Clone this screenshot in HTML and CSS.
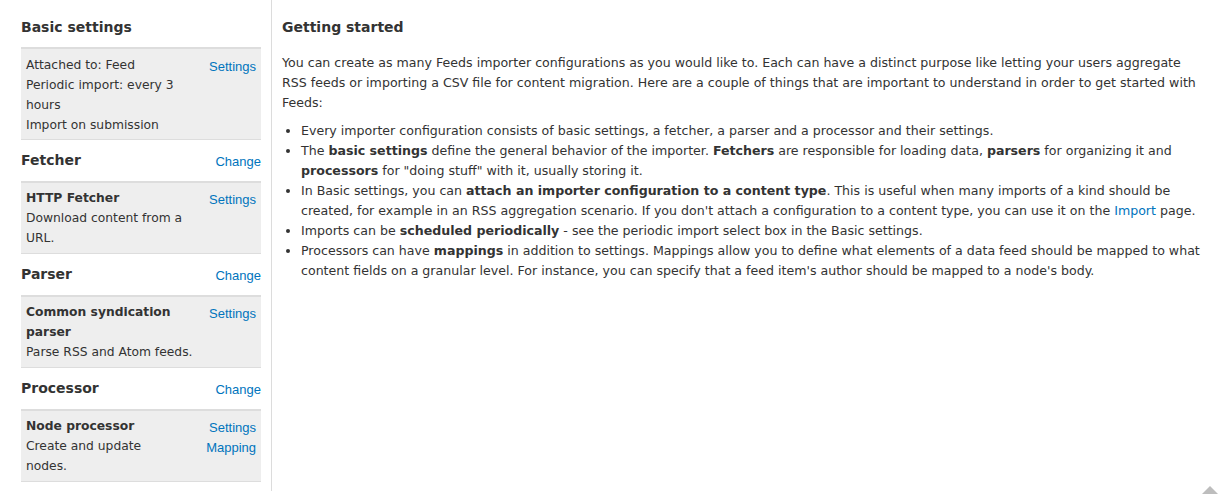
FILE: index.html
```html
<!DOCTYPE html>
<html lang="en">
<head>
<meta charset="utf-8">
<title>Feeds importer</title>
<link rel="stylesheet" href="styles.css">
</head>
<body>
<div class="page">
  <aside class="sidebar">
    <section class="group">
      <div class="group-head"><h2>Basic settings</h2></div>
      <div class="box box--first">
        <div class="box-text">
          <div>Attached to: Feed</div>
          <div>Periodic import: every 3 hours</div>
          <div>Import on submission</div>
        </div>
        <div class="box-links"><a href="#">Settings</a></div>
      </div>
    </section>
    <section class="group">
      <div class="group-head"><h2>Fetcher</h2><a class="change" href="#">Change</a></div>
      <div class="box">
        <div class="box-text">
          <div class="name">HTTP Fetcher</div>
          <div>Download content from a URL.</div>
        </div>
        <div class="box-links"><a href="#">Settings</a></div>
      </div>
    </section>
    <section class="group">
      <div class="group-head"><h2>Parser</h2><a class="change" href="#">Change</a></div>
      <div class="box">
        <div class="box-text">
          <div class="name">Common syndication parser</div>
          <div>Parse RSS and Atom feeds.</div>
        </div>
        <div class="box-links"><a href="#">Settings</a></div>
      </div>
    </section>
    <section class="group">
      <div class="group-head"><h2>Processor</h2><a class="change" href="#">Change</a></div>
      <div class="box">
        <div class="box-text box-text--narrow">
          <div class="name">Node processor</div>
          <div>Create and update nodes.</div>
        </div>
        <div class="box-links"><a href="#">Settings</a><a href="#">Mapping</a></div>
      </div>
    </section>
  </aside>
  <main class="content">
    <h1>Getting started</h1>
    <p>You can create as many Feeds importer configurations as you would like to. Each can have a distinct purpose like letting your users aggregate RSS feeds or importing a CSV file for content migration. Here are a couple of things that are important to understand in order to get started with Feeds:</p>
    <ul>
      <li>Every importer configuration consists of basic settings, a fetcher, a parser and a processor and their settings.</li>
      <li>The <strong>basic settings</strong> define the general behavior of the importer. <strong>Fetchers</strong> are responsible for loading data, <strong>parsers</strong> for organizing it and <strong>processors</strong> for "doing stuff" with it, usually storing it.</li>
      <li>In Basic settings, you can <strong>attach an importer configuration to a content type</strong>. This is useful when many imports of a kind should be created, for example in an RSS aggregation scenario. If you don't attach a configuration to a content type, you can use it on the <a href="#">Import</a> page.</li>
      <li>Imports can be <strong>scheduled periodically</strong> - see the periodic import select box in the Basic settings.</li>
      <li>Processors can have <strong>mappings</strong> in addition to settings. Mappings allow you to define what elements of a data feed should be mapped to what content fields on a granular level. For instance, you can specify that a feed item's author should be mapped to a node's body.</li>
    </ul>
  </main>
</div>
<a class="to-top" href="#" aria-label="Back to top"><svg width="20" height="10" viewBox="0 0 20 10"><polygon points="10,0 20,10 0,10" fill="#bdbdbd"/></svg></a>
</body>
</html>
```
FILE: styles.css
```css
html, body {
  margin: 0;
  padding: 0;
  background: #fff;
}
body {
  font-family: "DejaVu Sans", "Verdana", sans-serif;
  font-size: 12.3px;
  line-height: 20px;
  color: #333;
}
a {
  color: #0074bd;
  text-decoration: none;
}
.page {
  display: flex;
  align-items: flex-start;
}
.sidebar {
  flex: none;
  width: 240px;
  padding: 7px 10px 9px 21px;
  border-right: 1px solid #dcdcdc;
}
.group-head {
  display: flex;
  justify-content: space-between;
  align-items: baseline;
  margin: 10px 0;
}
.group-head h2 {
  margin: 0;
  font-size: 14px;
  line-height: 20px;
  font-weight: bold;
}
.change,
.box-links a {
  font-family: "Liberation Sans", Arial, sans-serif;
  font-size: 13px;
  line-height: 20px;
}
.change {
  position: relative;
  top: 1px;
}
.box {
  display: flex;
  justify-content: space-between;
  align-items: flex-start;
  gap: 8px;
  background: #eeeeee;
  border-top: 2px solid #dddddd;
  border-bottom: 1px solid #dddddd;
  padding: 5px;
}
.box--first {
  padding-top: 6px;
  padding-bottom: 4px;
}
.box-text {
  flex: 1;
}
.box-text--narrow {
  flex: 0 1 150px;
}
.box-text .name {
  font-weight: bold;
}
.box-links {
  flex: none;
  display: flex;
  flex-direction: column;
  align-items: flex-end;
  padding-top: 2px;
}
.content {
  flex: 1;
  padding: 7px 17px 0 10px;
  font-size: 12.6px;
}
.content h1 {
  margin: 10px 0 16px;
  font-size: 14px;
  line-height: 20px;
  font-weight: bold;
}
.content p {
  margin: 0 0 8px;
}
.content ul {
  margin: 0;
  padding: 0 0 0 19px;
}
.content li {
  list-style: disc;
}
.to-top {
  position: fixed;
  right: 3px;
  bottom: 0;
  width: 20px;
  height: 8px;
  overflow: hidden;
  display: block;
}
.to-top svg {
  display: block;
}
```
